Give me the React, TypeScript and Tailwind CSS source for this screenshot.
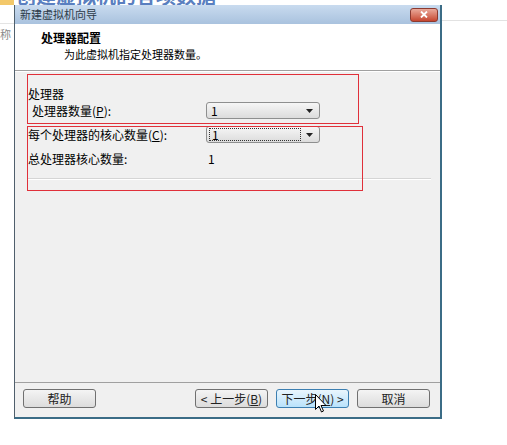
import React from 'react';

const font = { fontFamily: '"Noto Sans CJK SC", "Liberation Sans", sans-serif' };

const Combo: React.FC<{ value: string; focused?: boolean }> = ({ value, focused }) => (
  <div className="w-[114px] h-[17px] rounded-[3px] border border-[#8e8f8f] bg-gradient-to-b from-[#f6f6f6] to-[#dcdcdc] flex items-center px-[2px]">
    <div className={`flex-1 h-[13px] flex items-center pl-[2px] text-[12px] leading-none text-black ${focused ? 'border border-dotted border-[#333]' : ''}`}>
      {value}
    </div>
    <div className="w-[16px] flex justify-center">
      <svg width="7" height="4" viewBox="0 0 7 4"><path d="M0 0h7L3.5 4z" fill="#222" /></svg>
    </div>
  </div>
);

const Button: React.FC<{ children: React.ReactNode; primary?: boolean }> = ({ children, primary }) => (
  <button
    className={`w-[73px] h-[19px] rounded-[3px] border text-[12px] leading-none text-[#222] ${
      primary
        ? 'border-[#3c7fb1] bg-gradient-to-b from-[#eaf6fd] to-[#b9e2fb]'
        : 'border-[#707070] bg-gradient-to-b from-[#f4f4f4] to-[#dcdcdc]'
    }`}
  >
    {children}
  </button>
);

export default function App() {
  return (
    <div className="relative w-[507px] h-[445px] overflow-hidden bg-white" style={font}>
      {/* page behind the dialog */}
      <div className="absolute left-0 top-0 w-[14px] h-[5px] bg-[#f3c86a]" />
      <div className="absolute left-[16px] top-[-19px] text-[20px] font-bold text-[#5a7fc0] whitespace-nowrap">
        创建虚拟机的各项数据
      </div>
      <div className="absolute left-0 top-[23px] w-[14px] border-t border-[#e4e4e4]" />
      <div className="absolute left-[-11px] top-[26px] text-[11px] text-[#888]">名称</div>
      <div className="absolute left-[442px] top-[20px] w-[65px] border-t border-[#e2e2e2]" />

      {/* dialog window */}
      <div className="absolute left-[14px] top-[5px] w-[428px] h-[414px] flex flex-col border-l border-[#4f5f6c] border-r-2 border-r-[#3b6c86] border-b-2 border-b-[#3b6c86] bg-[#f0f0f0]">
        <div className="h-[19px] shrink-0 flex items-center justify-between pl-[5px] pr-[2px] bg-gradient-to-b from-[#c9dbef] to-[#a9c2de]">
          <span className="text-[11px] text-[#2c3a48]">新建虚拟机向导</span>
          <div className="w-[28px] h-[14px] rounded-[3px] border border-[#8b3a30] bg-gradient-to-b from-[#e9a99b] to-[#c5452f] flex items-center justify-center">
            <svg width="8" height="7" viewBox="0 0 8 7"><path d="M1 0.5l6 6M7 0.5l-6 6" stroke="white" strokeWidth="1.8" /></svg>
          </div>
        </div>

        <div className="h-[47px] shrink-0 bg-white pl-[26px] pt-[6px] border-b border-[#a0a0a0]">
          <div className="text-[12px] font-bold text-black leading-[16px]">处理器配置</div>
          <div className="text-[11px] text-black leading-[16px] pl-[23px]">为此虚拟机指定处理器数量。</div>
        </div>
        <div className="h-px bg-white shrink-0" />

        <div className="flex-1 pl-[13px] pr-[9px] pt-[15px] text-[12px] text-black">
          <div className="leading-[14px]">处理器</div>
          <div className="flex items-center h-[17px] mt-[1px]">
            <span className="w-[178px] pl-[4px]">处理器数量(<u>P</u>):</span>
            <Combo value="1" />
          </div>
          <div className="flex items-center h-[17px] mt-[7px]">
            <span className="w-[178px]">每个处理器的核心数量(<u>C</u>):</span>
            <Combo value="1" focused />
          </div>
          <div className="flex items-center h-[14px] mt-[9px]">
            <span className="w-[180px]">总处理器核心数量:</span>
            <span>1</span>
          </div>
          <div className="mt-[12px] border-t border-[#d5d5d5] border-b border-b-white" />
        </div>

        <div className="h-[35px] shrink-0 border-t border-[#a0a0a0] flex items-center pl-[8px] pr-[10px] pb-[3px] gap-[8px]">
          <Button>帮助</Button>
          <div className="flex-1" />
          <Button>&lt; 上一步(<u>B</u>)</Button>
          <Button primary>下一步(<u>N</u>) &gt;</Button>
          <Button>取消</Button>
        </div>
      </div>

      {/* annotation boxes */}
      <div className="absolute left-[27px] top-[74px] w-[332px] h-[50px] border border-[#e0303a]" />
      <div className="absolute left-[27px] top-[126px] w-[336px] h-[65px] border border-[#e0303a]" />

      {/* mouse cursor */}
      <svg className="absolute left-[315px] top-[394px]" width="12" height="19" viewBox="0 0 12 19">
        <path d="M0.5 0.5v15l3.5-3.5 2.5 6 2-1-2.5-5.5h5z" fill="white" stroke="black" strokeWidth="1" />
      </svg>
    </div>
  );
}
